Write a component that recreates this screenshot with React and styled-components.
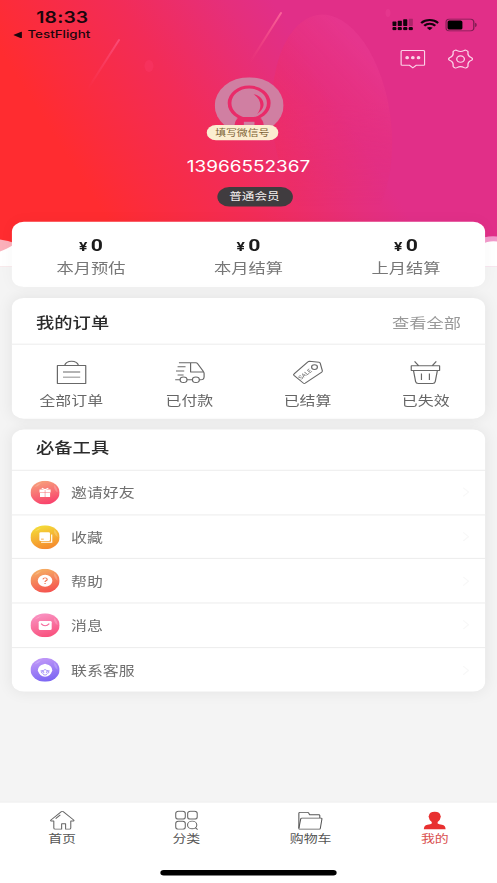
import styled, { createGlobalStyle } from "styled-components";

const GlobalStyle = createGlobalStyle`
  * {
    box-sizing: border-box;
  }
  body {
    margin: 0;
    background: #f4f4f4;
    overflow: hidden;
  }
`;

const Viewport = styled.div`
  width: 497px;
  height: 883px;
  overflow: hidden;
`;

/* 375 x 812 layout stretched over the whole viewport */
const Screen = styled.div`
  position: relative;
  display: flex;
  flex-direction: column;
  width: 375px;
  height: 812px;
  background: #f4f4f4;
  font-family: Inter, "Noto Sans CJK SC", sans-serif;
  color: #666;
  transform: scale(1.32533, 1.08744);
  transform-origin: 0 0;
`;

const Backdrop = styled.svg`
  position: absolute;
  top: 0;
  left: 0;
  width: 375px;
  height: 245px;
`;

const StatusBar = styled.div`
  position: relative;
  display: flex;
  justify-content: space-between;
  height: 44px;
  padding: 8px 15px 0 10px;
  color: #1b060c;
`;

const Clock = styled.div`
  padding-left: 17.4px;
  font-size: 14.6px;
  font-weight: 600;
  line-height: 16.4px;
  letter-spacing: 0.1px;
`;

const BackApp = styled.div`
  display: flex;
  align-items: center;
  gap: 4.2px;
  font-size: 10.1px;
  font-weight: 500;
  line-height: 15px;
`;

const StatusIcons = styled.div`
  display: flex;
  align-items: center;
  gap: 5px;
  height: 12px;
  margin-top: 8.5px;
`;

const Actions = styled.div`
  position: relative;
  display: flex;
  justify-content: flex-end;
  gap: 17px;
  height: 27px;
  padding: 0.5px 18.5px 0 0;
`;

const Profile = styled.div`
  position: relative;
  display: flex;
  flex-direction: column;
  align-items: center;
  height: 133px;
`;

const Avatar = styled.div`
  position: relative;
  width: 52px;
  height: 52px;
`;

const WechatBadge = styled.div`
  position: absolute;
  top: 44px;
  left: -5.7px;
  width: 54px;
  height: 14.4px;
  border-radius: 8px;
  background: #fbeed0;
  color: #7b6235;
  font-size: 8.2px;
  line-height: 14px;
  text-align: center;
  white-space: nowrap;
`;

const Phone = styled.div`
  margin-top: 20px;
  color: #fff;
  font-size: 14.3px;
  line-height: 19px;
`;

const Level = styled.div`
  width: 57px;
  height: 18px;
  margin: 10px 0 0 9px;
  border-radius: 9px;
  background: #403c3f;
  color: #f3efef;
  font-size: 9.5px;
  line-height: 17px;
  text-align: center;
`;

const Card = styled.section`
  position: relative;
  height: ${(props) => props.$height}px;
  margin: 0 9.2px ${(props) => props.$gap}px;
  border-radius: 9px;
  background: #fff;
  box-shadow: 0 0 12px rgba(0, 0, 0, ${(props) => props.$shade || 0.07});
`;

const Stats = styled.div`
  display: grid;
  grid-template-columns: repeat(3, 1fr);
  padding-top: 11.5px;
  text-align: center;
`;

const Amount = styled.div`
  color: #1c1c1c;
  font-family: Roboto, sans-serif;
  font-size: 16px;
  font-weight: 700;
  line-height: 20px;

  small {
    margin-right: 2.5px;
    font-size: 11.8px;
  }
`;

const StatLabel = styled.div`
  color: #777;
  font-size: 13px;
  line-height: 18px;
`;

const CardHeader = styled.header`
  display: flex;
  align-items: center;
  justify-content: space-between;
  height: ${(props) => props.$height}px;
  padding: ${(props) => props.$padding};
  border-bottom: 1px solid #eee;
`;

const Title = styled.h2`
  margin: 0;
  color: #2b2b2b;
  font-size: 13.8px;
  font-weight: 500;
  line-height: 18px;
`;

const More = styled.span`
  color: #999;
  font-size: 13px;
  line-height: 18px;
`;

const Orders = styled.div`
  display: grid;
  grid-template-columns: repeat(4, 1fr);
`;

const Order = styled.div`
  display: flex;
  flex-direction: column;
  align-items: center;
  gap: 4.8px;
  padding-top: 13.2px;
  font-size: 12px;
  line-height: 18px;
`;

const Tool = styled.div`
  display: flex;
  align-items: center;
  gap: 8.8px;
  height: 40.7px;
  padding: 0 12px 0 13.6px;
  border-bottom: 1px solid #eee;
  color: #707070;
  font-size: 12px;

  &:last-child {
    border-bottom: none;
  }
`;

const ToolLabel = styled.span`
  padding-bottom: 2.2px;
`;

const Arrow = styled.svg`
  margin-left: auto;
`;

const TabBar = styled.nav`
  display: grid;
  grid-template-columns: repeat(4, 1fr);
  height: 75px;
  margin-top: auto;
  border-top: 1px solid #ececec;
  background: #fff;
`;

const Tab = styled.div`
  display: flex;
  flex-direction: column;
  align-items: center;
  gap: 1.2px;
  padding-top: 6.9px;
  color: ${(props) => (props.$active ? "#d9504f" : "#555")};
  font-size: 10.5px;
  line-height: 13px;
`;

const HomeIndicator = styled.div`
  position: absolute;
  left: 120.7px;
  bottom: 7.3px;
  width: 133.6px;
  height: 5px;
  border-radius: 3px;
  background: #000;
`;

function HeaderArt() {
  return (
    <Backdrop viewBox="0 0 497 266" preserveAspectRatio="none">
      <defs>
        <linearGradient id="sky" gradientUnits="userSpaceOnUse" x1="-23" y1="15" x2="194" y2="-123">
          <stop offset="0" stopColor="#ff2c30" />
          <stop offset="0.5" stopColor="#f22c58" />
          <stop offset="0.85" stopColor="#e52f7c" />
          <stop offset="1" stopColor="#e12f88" />
        </linearGradient>
        <linearGradient id="planet" gradientUnits="userSpaceOnUse" x1="275" y1="150" x2="385" y2="70">
          <stop offset="0" stopColor="#f52a55" stopOpacity="0.5" />
          <stop offset="0.5" stopColor="#ee2d6b" stopOpacity="0.4" />
          <stop offset="1" stopColor="#ea3c92" stopOpacity="0.5" />
        </linearGradient>
        <linearGradient id="fade" x1="0" y1="0" x2="0" y2="1">
          <stop offset="0.4" stopColor="#fff" />
          <stop offset="0.85" stopColor="#000" />
        </linearGradient>
        <mask id="planetMask">
          <rect x="240" y="10" width="170" height="230" fill="url(#fade)" />
        </mask>
        <linearGradient id="meteor" x1="1" y1="0" x2="0" y2="1">
          <stop offset="0" stopColor="#ff6c9c" stopOpacity="0.85" />
          <stop offset="1" stopColor="#ff5080" stopOpacity="0" />
        </linearGradient>
      </defs>
      <rect width="497" height="243" fill="url(#sky)" />
      <g mask="url(#planetMask)">
        <ellipse cx="332" cy="125" rx="59" ry="111" fill="url(#planet)" transform="rotate(-7 332 125)" />
      </g>
      <ellipse cx="149" cy="66" rx="4.5" ry="6" fill="#ff4070" opacity="0.3" />
      <ellipse cx="388" cy="13" rx="2.5" ry="4" fill="#f556a5" opacity="0.2" />
      <path d="M119 40L87 90" stroke="url(#meteor)" strokeWidth="2" strokeLinecap="round" opacity="0.6" />
      <path d="M281 13L250 62" stroke="url(#meteor)" strokeWidth="2" strokeLinecap="round" />
      <path d="M0 239Q8 240 16 243V266H0Z" fill="#fbb0ba" />
      <path d="M497 236Q485 235 478 240V266H497Z" fill="#f29acb" />
      <path d="M0 251Q6 249 14 244H482Q488 240 497 241V266H0Z" fill="#fff" />
    </Backdrop>
  );
}

function Signal() {
  return (
    <svg width="15.5" height="10.8" viewBox="0 0 20 11.3" preserveAspectRatio="none" fill="#12040c">
      <rect x="0" y="3" width="4" height="4.2" rx="0.6" />
      <rect x="5.3" y="2.2" width="4" height="5" rx="0.6" />
      <rect x="10.6" y="0.8" width="4" height="6.4" rx="0.6" />
      <rect x="16" y="0" width="4" height="7.2" rx="0.6" opacity="0.25" />
      <rect x="0" y="8.3" width="4" height="3" rx="1" />
      <rect x="5.3" y="8.3" width="4" height="3" rx="1" />
      <rect x="10.6" y="8.3" width="4" height="3" rx="1" />
      <rect x="16" y="8.3" width="4" height="3" rx="1" />
    </svg>
  );
}

function Wifi() {
  return (
    <svg width="14.5" height="11" viewBox="0 0 15 11" fill="none" stroke="#12040c" strokeWidth="1.9">
      <path d="M0.8 4.2C4.5 0.4 10.5 0.4 14.2 4.2" />
      <path d="M3.2 6.7C5.6 4.2 9.4 4.2 11.8 6.7" />
      <path d="M5.2 8.7Q7.5 6.9 9.8 8.7L7.5 11Z" fill="#12040c" stroke="none" />
    </svg>
  );
}

function Battery() {
  return (
    <svg width="24" height="12" viewBox="0 0 24 12">
      <rect x="0.5" y="0.5" width="21" height="11" rx="2.8" fill="none" stroke="#7d1c50" />
      <rect x="1.7" y="1.8" width="11.2" height="8.4" rx="1.4" fill="#000" />
      <path d="M22.6 4C24 4.6 24 7.4 22.6 8Z" fill="#6c1745" />
    </svg>
  );
}

function MessageIcon() {
  return (
    <svg width="19" height="19" viewBox="0 0 19 19" fill="none" stroke="#fbd3e8" strokeWidth="1">
      <path d="M1.5 1.5H17.5Q18.4 1.5 18.4 2.4V14.2Q18.4 15 17.5 15H12L9.5 17.4L7 15H1.5Q0.6 15 0.6 14.2V2.4Q0.6 1.5 1.5 1.5Z" />
      <circle cx="5.2" cy="8" r="0.9" fill="#fbd3e8" />
      <circle cx="9.5" cy="8" r="0.9" fill="#fbd3e8" />
      <circle cx="13.8" cy="8" r="0.9" fill="#fbd3e8" />
    </svg>
  );
}

function GearIcon() {
  return (
    <svg width="19" height="19" viewBox="0 0 19 19" fill="none" stroke="#fbd3e8" strokeWidth="1" strokeLinejoin="round">
      <path d="M5.2 1.3Q6 0.8 6.8 1.4Q9.5 3.2 12.2 1.4Q13 0.8 13.8 1.3L14.8 2Q15.3 2.5 15.1 3.3Q14.7 6.7 17.8 8.1Q18.5 8.6 18.5 9.3Q18.5 10.1 17.8 10.5Q14.7 12 15.1 15.3Q15.3 16.1 14.8 16.6L13.8 17.3Q13 17.8 12.2 17.2Q9.5 15.4 6.8 17.2Q6 17.8 5.2 17.3L4.2 16.6Q3.7 16.1 3.9 15.3Q4.3 12 1.2 10.5Q0.5 10.1 0.5 9.3Q0.5 8.6 1.2 8.1Q4.3 6.7 3.9 3.3Q3.7 2.5 4.2 2Z" />
      <circle cx="9.5" cy="9.3" r="2.9" />
    </svg>
  );
}

function AvatarArt() {
  return (
    <svg width="52" height="52" viewBox="0 0 52 52">
      <circle cx="26" cy="26" r="26" fill="#d07fa2" />
      <circle cx="26" cy="23.8" r="14.8" fill="none" stroke="#e92b69" strokeWidth="2.8" />
      <path d="M19 36.5H33Q36.8 38.5 37 44V49H15V44Q15.2 38.5 19 36.5Z" fill="#e92b69" />
      <rect x="22" y="41" width="8" height="6" fill="#d07fa2" />
      <path d="M29.4 15.6C37.5 17.5 40 28 32 33.8C35.8 28 35.5 20.5 29.4 15.6Z" fill="#e92b69" />
    </svg>
  );
}

const orderLine = { fill: "none", stroke: "#686868", strokeWidth: 0.9, strokeLinejoin: "round" };

function BagIcon() {
  return (
    <svg width="24" height="24" viewBox="0 0 24 24" {...orderLine}>
      <path d="M1.3 6.2H22.7V22.7H1.3Z" />
      <path d="M6.8 6C8 0.8 16 0.8 17.2 6M5.5 12H18.5M5.5 16.8H18.5" />
    </svg>
  );
}

function TruckIcon() {
  return (
    <svg width="24" height="24" viewBox="0 0 24 24" {...orderLine}>
      <path d="M4 3.5H12.8V12H22.4M12.8 3.5H16.8Q17.6 3.5 18 4.2L22.2 11.2Q23 12.5 23 13.5V16.5Q23 19.3 20.4 19.3H19.3" />
      <path d="M3 7.3H9M1.8 11.1H8M3 14.9H7.5M1.2 19.2H5M10 19.2H14.2" />
      <circle cx="7.5" cy="19.2" r="2.6" />
      <circle cx="16.8" cy="19.2" r="2.6" />
    </svg>
  );
}

function TagIcon() {
  return (
    <svg width="24" height="24" viewBox="0 0 24 24" {...orderLine}>
      <path d="M13.5 2.2L20.7 3.1Q21.4 3.2 21.6 4L23.2 10.8Q23.3 11.5 22.8 12.1L10.3 22.3Q9.5 22.9 8.8 22.2L1.8 15.2Q1.2 14.5 1.9 13.8L12.3 2.8Q12.8 2.2 13.5 2.2Z" />
      <circle cx="17.3" cy="7.6" r="2.2" />
      <text x="7" y="19.4" transform="rotate(-43 7 19.4)" fontSize="4.8" fontFamily="Inter" stroke="none" fill="#686868">
        SALE
      </text>
    </svg>
  );
}

function BasketIcon() {
  return (
    <svg width="24" height="24" viewBox="0 0 24 24" {...orderLine}>
      <path d="M1.3 6.3H22.7V10.8H1.3ZM3 10.8L4.6 21Q4.9 22.7 6.6 22.7H17.4Q19.1 22.7 19.4 21L21 10.8M9 13.4V19.4M15 13.4V19.4M3.8 2.3L6.8 6.2M20.2 2.3L17.2 6.2" />
    </svg>
  );
}

function ToolIcon({ id, from, to, children }) {
  return (
    <svg width="22" height="22" viewBox="0 0 22 22">
      <defs>
        <linearGradient id={id} x1="0.3" y1="0" x2="0.6" y2="1">
          <stop offset="0" stopColor={from} />
          <stop offset="1" stopColor={to} />
        </linearGradient>
      </defs>
      <circle cx="11" cy="11" r="11" fill={`url(#${id})`} />
      <path d="M3 5.8Q5 3 8 2.2Q6.5 5 3 5.8ZM18 4Q20.5 7 20.5 11Q17 8 18 4Z" fill="#fff" opacity="0.2" />
      {children}
    </svg>
  );
}

function HomeIcon() {
  return (
    <svg width="20" height="19" viewBox="0 0 20 19" fill="none" stroke="#666" strokeWidth="0.8" strokeLinejoin="round">
      <path d="M9.3 1.4Q10 0.9 10.7 1.4L18.8 9.3Q18.9 10 18 10H16.4V16.5Q16.4 17.5 15.4 17.5H12.5V12.5H9.5V17.5H4.6Q3.6 17.5 3.6 16.5V10H2Q1.1 10 1.2 9.3Z" />
      <path d="M5 7.8L8.5 4.4" />
    </svg>
  );
}

function CategoryIcon() {
  return (
    <svg width="20" height="19" viewBox="0 0 20 19" fill="none" stroke="#666" strokeWidth="0.8">
      <rect x="1.6" y="1" width="7.2" height="7.2" rx="2" />
      <rect x="10.6" y="1" width="7.2" height="7.2" rx="2" />
      <rect x="1.6" y="10.2" width="7.2" height="7.2" rx="2" />
      <circle cx="14" cy="13.6" r="3.5" />
      <path d="M16.4 16.1L18.1 17.9" />
    </svg>
  );
}

function FolderIcon() {
  return (
    <svg width="20" height="19" viewBox="0 0 20 19" fill="none" stroke="#555" strokeWidth="0.8" strokeLinejoin="round">
      <path d="M1.5 16.5V2.8Q1.5 2 2.3 2H8Q8.6 2 8.9 2.6L9.5 4.2H16.5Q17.3 4.2 17.3 5V7.2" />
      <path d="M3.7 7.3H18.2Q19 7.3 18.9 8.1L17.7 16.7Q17.5 17.5 16.7 17.5H2.2Q1.4 17.5 1.5 16.7L2.9 8Q3.1 7.3 3.7 7.3Z" />
    </svg>
  );
}

function UserIcon() {
  return (
    <svg width="20" height="19" viewBox="0 0 20 19" fill="#e83030">
      <path d="M10 1.5Q14.2 1.5 14.3 5Q15 5.5 14.4 6.8Q14.2 9.6 12.2 11V12.2Q13 12.8 15.5 13.4Q18.3 14.2 18.2 17.6H1.8Q1.7 14.2 4.5 13.4Q7 12.8 7.8 12.2V11Q5.800 9.6 5.6 6.8Q5 5.5 5.7 5Q5.8 1.5 10 1.5Z" />
    </svg>
  );
}

const stats = ["本月预估", "本月结算", "上月结算"];

const orders = [
  { label: "全部订单", Icon: BagIcon },
  { label: "已付款", Icon: TruckIcon },
  { label: "已结算", Icon: TagIcon },
  { label: "已失效", Icon: BasketIcon },
];

const tools = [
  {
    id: "invite",
    label: "邀请好友",
    from: "#f7a27c",
    to: "#f93f6c",
    glyph: (
      <g fill="#fff">
        <path d="M6.8 8.2H10.8V10.8H6.8ZM11.2 8.2H15.2V10.8H11.2ZM7.2 11.3H10.8V15H7.2ZM11.2 11.3H14.8V15H11.2Z" />
        <path d="M11 8.4L8.5 6.8M11 8.4L13.5 6.8" stroke="#fff" strokeWidth="0.9" />
      </g>
    ),
  },
  {
    id: "collect",
    label: "收藏",
    from: "#f4de38",
    to: "#f5882e",
    glyph: (
      <g>
        <rect x="6.7" y="6.5" width="8" height="8" rx="1" fill="#fff" />
        <path d="M16 8.5V15.6H8" fill="none" stroke="#fff" strokeWidth="0.9" />
        <path d="M8 12.8H10" stroke="#f4a030" strokeWidth="0.7" />
      </g>
    ),
  },
  {
    id: "help",
    label: "帮助",
    from: "#f5b164",
    to: "#f5524f",
    glyph: (
      <g>
        <circle cx="11" cy="11" r="5.5" fill="#fff" />
        <path d="M9.4 9.8Q9.5 8.4 11 8.4Q12.6 8.4 12.6 9.8Q12.6 10.6 11.7 11.1Q11 11.5 11 12.2M11 13.2V14" fill="none" stroke="#f07250" strokeWidth="0.9" />
      </g>
    ),
  },
  {
    id: "message",
    label: "消息",
    from: "#f994c4",
    to: "#f9507c",
    glyph: (
      <g>
        <rect x="6.2" y="7" width="9.8" height="8.4" rx="1.2" fill="#fff" />
        <path d="M8 9.5Q11 13.5 14.2 9.5" fill="none" stroke="#f6699c" strokeWidth="0.9" />
      </g>
    ),
  },
  {
    id: "service",
    label: "联系客服",
    from: "#c39af8",
    to: "#7a65f3",
    glyph: (
      <g>
        <circle cx="11" cy="12.3" r="5" fill="#fff" />
        <path d="M5.5 11.5Q6 6.5 10 5.8Q11 4.8 12 5.8Q16 6.5 16.5 11.5Q16 13.5 15.4 12L7 12Q5.8 13.4 5.5 11.5Z" fill="#fff" />
        <path d="M7.6 12Q10 12 11 10.6Q12 12 14.5 12" fill="none" stroke="#8c74f5" strokeWidth="0.6" />
        <circle cx="9.2" cy="13.2" r="0.9" fill="none" stroke="#8c74f5" strokeWidth="0.6" />
        <circle cx="12.9" cy="13.2" r="0.9" fill="none" stroke="#8c74f5" strokeWidth="0.6" />
        <path d="M9.5 15.2Q11 16.4 12.5 15.2" fill="none" stroke="#8c74f5" strokeWidth="0.6" />
      </g>
    ),
  },
];

const tabs = [
  { label: "首页", Icon: HomeIcon },
  { label: "分类", Icon: CategoryIcon },
  { label: "购物车", Icon: FolderIcon },
  { label: "我的", Icon: UserIcon, active: true },
];

function App() {
  return (
    <Viewport>
      <GlobalStyle />
      <Screen>
        <HeaderArt />
        <StatusBar>
          <div>
            <Clock>18:33</Clock>
            <BackApp>
              <svg width="6.5" height="6.5" viewBox="0 0 7 7">
                <path d="M0 3.5L7 0V7Z" fill="#1b060c" />
              </svg>
              TestFlight
            </BackApp>
          </div>
          <StatusIcons>
            <Signal />
            <Wifi />
            <Battery />
          </StatusIcons>
        </StatusBar>
        <Actions>
          <MessageIcon />
          <GearIcon />
        </Actions>
        <Profile>
          <Avatar>
            <AvatarArt />
            <WechatBadge>填写微信号</WechatBadge>
          </Avatar>
          <Phone>13966552367</Phone>
          <Level>普通会员</Level>
        </Profile>

        <Card $height={60} $gap={10} $shade={0.03}>
          <Stats>
            {stats.map((label) => (
              <div key={label}>
                <Amount>
                  <small>¥</small>0
                </Amount>
                <StatLabel>{label}</StatLabel>
              </div>
            ))}
          </Stats>
        </Card>

        <Card $height={111} $gap={9.5}>
          <CardHeader $height={42.8} $padding="4px 18px 0">
            <Title>我的订单</Title>
            <More>查看全部</More>
          </CardHeader>
          <Orders>
            {orders.map(({ label, Icon }) => (
              <Order key={label}>
                <Icon />
                {label}
              </Order>
            ))}
          </Orders>
        </Card>

        <Card $height={241.5} $gap={0}>
          <CardHeader $height={38.5} $padding="0 18px 1.6px">
            <Title>必备工具</Title>
          </CardHeader>
          {tools.map((tool) => (
            <Tool key={tool.id}>
              <ToolIcon id={tool.id} from={tool.from} to={tool.to}>
                {tool.glyph}
              </ToolIcon>
              <ToolLabel>{tool.label}</ToolLabel>
              <Arrow width="5" height="9" viewBox="0 0 5 9" fill="none" stroke="#f8f8f8">
                <path d="M0.5 0.5L4.5 4.5L0.5 8.5" />
              </Arrow>
            </Tool>
          ))}
        </Card>

        <TabBar>
          {tabs.map(({ label, Icon, active }) => (
            <Tab key={label} $active={active}>
              <Icon />
              {label}
            </Tab>
          ))}
        </TabBar>
        <HomeIndicator />
      </Screen>
    </Viewport>
  );
}

export default App;
